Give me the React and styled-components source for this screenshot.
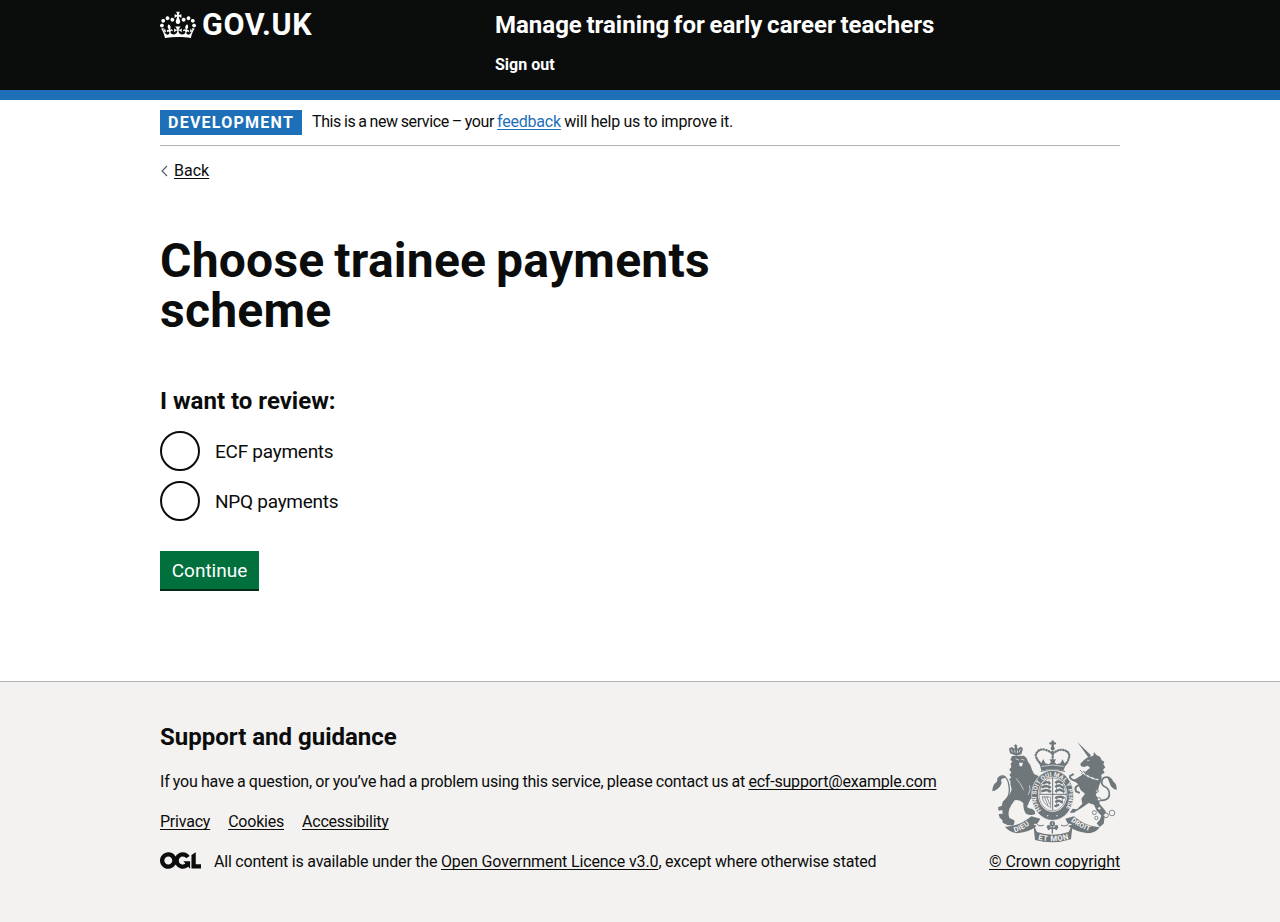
import React from 'react';
import styled, { createGlobalStyle } from 'styled-components';

const Global = createGlobalStyle`
  *, *::before, *::after { box-sizing: border-box; }
  html, body { margin: 0; padding: 0; background: #f3f2f1; }
  body { font-family: Roboto, "Liberation Sans", sans-serif; color: #0b0c0c; }
  h1, h2, p { margin: 0; padding: 0; }
`;

const Container = styled.div`
  width: 960px;
  margin: 0 auto;
`;

const Header = styled.header`
  height: 100px;
  background: #0b0c0c;
  border-bottom: 10px solid #1d70b8;
  color: #fff;
`;

const HeaderRow = styled(Container)`
  display: grid;
  grid-template-columns: 335px 1fr;
`;

const Logo = styled.a`
  display: flex;
  align-items: flex-start;
  gap: 6px;
  height: 50px;
  padding-top: 9px;
  color: #fff;
`;

const Crown = styled.svg`
  width: 36px;
  height: 32px;
  fill: currentColor;
  display: block;
`;

const LogoText = styled.span`
  padding-top: 1px;
  font: 700 30.5px/30px Roboto, sans-serif;
  letter-spacing: 0.65px;
`;

const ServiceName = styled.a`
  display: block;
  padding-top: 10px;
  font-size: 24px;
  line-height: 30px;
  font-weight: 700;
  word-spacing: -1.3px;
  white-space: nowrap;
`;

const NavLink = styled.a`
  display: block;
  margin-top: 15px;
  font-size: 16px;
  line-height: 20px;
  font-weight: 700;
`;

const Page = styled.div`
  background: #fff;
`;

const PhaseBanner = styled.div`
  display: flex;
  align-items: flex-start;
  gap: 10px;
  height: 46px;
  padding: 10px 0;
  border-bottom: 1px solid #b1b4b6;
`;

const Tag = styled.strong`
  width: 142px;
  height: 25px;
  padding-left: 8px;
  background: #1d70b8;
  color: #fff;
  font-size: 16px;
  line-height: 25px;
  letter-spacing: 1.25px;
  white-space: nowrap;
`;

const Text = styled.p`
  margin-top: ${(p) => p.$top || 0}px;
  font-size: 16px;
  line-height: 20px;
  letter-spacing: ${(p) => p.$track}px;
  word-spacing: ${(p) => p.$word || 0}px;
  white-space: nowrap;
`;

const Span = styled.span`
  letter-spacing: ${(p) => p.$track}px;
  word-spacing: ${(p) => p.$word}px;
`;

const Link = styled.a`
  color: ${(p) => (p.$blue ? '#1d70b8' : 'inherit')};
  text-decoration: underline;
  text-decoration-thickness: 1px;
  text-underline-offset: 2px;
  text-decoration-skip-ink: none;
  letter-spacing: ${(p) => (p.$track === undefined ? 'inherit' : `${p.$track}px`)};
`;

const BackLink = styled.div`
  display: flex;
  align-items: center;
  gap: 6px;
  margin-top: 15px;
  height: 20px;
  font-size: 16px;
  line-height: 20px;
`;

const Main = styled.main`
  padding: 55px 0 90px;
  height: 500px;
`;

const Title = styled.h1`
  width: 630px;
  font-size: 48px;
  line-height: 50px;
  font-weight: 700;
  letter-spacing: 0.24px;
  word-spacing: -2.3px;
  margin-bottom: 50px;
`;

const Heading = styled.h2`
  font-size: 24px;
  line-height: 30px;
  font-weight: 700;
`;

const Radios = styled.div`
  display: grid;
  gap: 10px;
  margin: 15px 0 30px;
`;

const Option = styled.label`
  display: flex;
  align-items: center;
  gap: 15px;
  height: 40px;
  font-size: 19px;
  line-height: 25px;
  letter-spacing: -0.26px;
`;

const Radio = styled.input`
  appearance: none;
  width: 40px;
  height: 40px;
  margin: 0;
  border: 2px solid #0b0c0c;
  border-radius: 50%;
`;

const Button = styled.button`
  display: block;
  width: 99px;
  height: 40px;
  border: 0;
  border-bottom: 2px solid #002d18;
  padding: 1px 0 0;
  background: #00703c;
  color: #fff;
  font: 400 19px/37px Roboto, sans-serif;
`;

const Footer = styled.footer`
  height: 241px;
  border-top: 1px solid #b1b4b6;
  background: #f3f2f1;
`;

const FooterRow = styled(Container)`
  display: flex;
  justify-content: space-between;
  padding-top: 40px;
`;

const FooterLinks = styled.div`
  display: flex;
  gap: 18px;
  margin: 20px 0;
  font-size: 16px;
  line-height: 20px;
  letter-spacing: -0.22px;
`;

const Licence = styled.div`
  display: flex;
  align-items: center;
  gap: 13px;
`;

const Ogl = styled.svg`
  width: 41px;
  height: 17px;
  fill: currentColor;
  margin-bottom: 3px;
`;

const Copyright = styled.div`
  width: 131px;
  padding-top: 18px;
`;

const CrestArt = styled.svg`
  display: block;
  width: 125px;
  height: 102px;
  margin: 0 0 10px 3px;
  overflow: visible;
`;

const GREY = '#6f777b';
const PAPER = '#f3f2f1';

const Ball = ({ x, y, r = 4 }) => <circle cx={x} cy={y} r={r} fill={GREY} />;

function Crest() {
  const line = { fill: 'none', stroke: GREY, strokeLinecap: 'round', strokeLinejoin: 'round' };
  const light = { fill: 'none', stroke: PAPER, strokeLinecap: 'round', strokeLinejoin: 'round' };
  const motto = { fill: PAPER, fontFamily: 'Roboto, sans-serif', fontWeight: 700 };
  return (
    <CrestArt viewBox="36 30 375 306" role="img" aria-label="Royal coat of arms">
      <defs>
        <path id="garter" d="M184 241A49 59 0 1 1 252 241" />
        <path id="ribbon-left" d="M104 307Q136 298 160 274" />
        <path id="ribbon-mid" d="M174 328Q218 340 266 327" />
        <path id="ribbon-right" d="M272 273Q302 299 342 306" />
      </defs>

      {/* lion: tail, body and legs */}
      <path {...line} strokeWidth="4" d="M76 211Q90 196 88 176Q86 145 71 138Q60 135 53 147" />
      <path fill={GREY} d="M76 137Q54 137 50 156Q37 163 37 184Q55 180 62 166Q67 159 63 149Q68 143 76 144Z" />
      <path fill={GREY} d="M96 78L131 77Q141 82 144 95L151 105L156 119L162 132L177 139L172 149L179 156L170 164L174 176L166 184L171 197L160 195L164 209L152 206Q145 221 141 231Q149 238 156 236Q168 243 165 253Q152 258 139 252Q129 241 130 219Q118 208 104 211Q94 224 88 237Q83 256 89 265L102 270Q106 278 99 287L82 285L68 278L67 270L59 263L56 252L68 251L67 240L56 242L54 232L66 227Q66 214 76 208Q91 196 95 178Q91 167 91 154L87 147L94 143L88 134L94 128L88 118L94 112L92 101L97 94L91 90Z" />
      <path {...light} strokeWidth="2" d="M108 87L116 90M125 88L132 90M109 146Q122 160 130 178M149 167Q154 180 145 194" />
      <path fill={PAPER} d="M117 98L129 98L126 109L119 109Z" />
      {/* lion's crown */}
      <path fill={GREY} d="M90 70L87 57Q89 50 97 52L104 57L104 48L111 48L112 57L121 50Q130 52 128 59L124 73L109 77Z" />
      <path {...light} strokeWidth="2" d="M94 59L97 66M104 61L105 67M113 61L112 68M121 58L118 66" />
      <path {...line} strokeWidth="3" d="M107 44V51M103 47H111" />

      {/* imperial crown */}
      <path {...line} strokeWidth="7" d="M218 34V57M211 40H225" />
      <circle cx="218" cy="55" r="6" fill={GREY} />
      <path {...line} strokeWidth="7" strokeDasharray="1 7" d="M184 103Q164 83 168 72Q176 55 195 59Q208 63 218 71Q232 60 245 59Q267 62 268 77Q266 94 254 106" />
      <path {...line} strokeWidth="7" strokeDasharray="1 7" d="M218 65V96" />
      <path fill={GREY} d="M180 106L174 95L184 98L190 87L196 100L207 103L213 96L208 87L218 90L228 87L224 97L230 103L241 100L248 88L253 99L263 96L256 107L250 122Q218 114 184 122Z" />
      <path {...light} strokeWidth="2" d="M186 109Q218 101 250 109" />
      <path {...line} strokeWidth="3" d="M183 124Q218 114 254 124" />

      {/* garter and shield */}
      <ellipse cx="218" cy="196" rx="63" ry="75" fill={GREY} stroke={PAPER} strokeWidth="2" />
      <text {...motto} fontSize="18.5" letterSpacing="0.3">
        <textPath href="#garter">HONI SOIT QUI MAL Y PENSE</textPath>
      </text>
      <ellipse cx="218" cy="193" rx="44" ry="53" fill={PAPER} />
      <ellipse cx="218" cy="193" rx="41" ry="50" {...line} strokeWidth="2" />
      <path {...line} strokeWidth="3" d="M218 145V240M179 193H258" />
      <path {...line} strokeWidth="7" d="M191 160L199 156L209 159M187 171L199 168L210 172M187 183L199 180L211 184M228 157L236 154L245 159M228 169L238 166L250 173M228 183L239 179L251 184M228 203L240 200L251 203M228 215L237 212L246 217M226 228L235 225" />
      <path {...line} strokeWidth="2.2" d="M182 164V190M207 152V188M230 152V188M251 166V190M230 199V231M247 198V216M187 201Q187 219 208 231M193 200L204 227M200 199L209 222M187 201H212V234" />
      <path {...light} strokeWidth="4" d="M203 257V257.5M231 257V257.5" />

      {/* unicorn: horn, head, body and legs */}
      <path fill={GREY} d="M292 36L333 76L326 83Z" />
      <path fill={GREY} d="M323 82L340 77L342 66L349 75L360 80L365 91L373 95L370 103L376 112L369 119L374 128L364 134L365 149L358 165L354 180L347 195L357 208L359 222L376 242L383 260L374 261L371 281L359 291L350 280L359 270L364 257L350 242L342 224L326 219L308 232Q292 242 281 248L269 248L278 236L291 238L307 221L304 206L315 191L302 180L293 161L280 151L290 145L307 134L322 120L330 114L324 107L312 111L303 109L301 101L312 90Z" />
      <path {...light} strokeWidth="5" d="M304 123Q325 145 353 148" />
      <path {...line} strokeWidth="2.5" d="M301 121L307 127L312 123L318 136L325 130L331 142L340 136L345 147L356 144M304 130Q325 149 352 153" />
      <path {...light} strokeWidth="2" d="M322 91L328 91" />
      <path {...line} strokeWidth="6" d="M292 154Q268 150 270 138L279 133M305 165Q281 165 288 184L297 188" />
      <path {...line} strokeWidth="5" d="M357 211Q387 213 388 194Q389 175 372 169Q359 160 370 144Q386 136 396 152" />
      <path fill={GREY} d="M382 142Q394 145 399 154Q411 161 410 180Q393 175 389 160Z" />
      {/* chain */}
      <g fill={PAPER} stroke={GREY} strokeWidth="2.5">
        <circle cx="351" cy="183" r="4" />
        <circle cx="357" cy="208" r="5" />
        <circle cx="358" cy="235" r="5" />
        <circle cx="343" cy="248" r="6" />
        <circle cx="349" cy="264" r="5" />
        <circle cx="378" cy="256" r="7" />
        <circle cx="396" cy="249" r="8.5" />
      </g>

      {/* ribbon */}
      <path fill={GREY} d="M75 290Q115 291 154 259L181 266L173 280L160 283L170 288Q149 306 112 310Q86 306 75 290ZM359 292Q319 291 282 259L256 266L263 280L277 283L264 288Q288 306 324 310Q348 309 359 292Z" />
      <path fill={GREY} d="M160 282L171 306Q218 322 266 306L278 282L273 328Q219 345 165 330Z" />
      <path {...line} strokeWidth="3" d="M168 278Q174 292 190 286M268 278Q260 293 244 286" />
      <text {...motto} fontSize="22" letterSpacing="1"><textPath href="#ribbon-left">DIEU</textPath></text>
      <text {...motto} fontSize="23" letterSpacing="1.7"><textPath href="#ribbon-mid">ET MON</textPath></text>
      <text {...motto} fontSize="21" letterSpacing="0.9"><textPath href="#ribbon-right">DROIT</textPath></text>
      {/* rose and thistle */}
      <path {...line} strokeWidth="4" d="M217 275V309M205 298Q217 290 230 298" />
      <Ball x={217} y={281} r={8} />
      <Ball x={206} y={291} r={6} />
      <Ball x={229} y={291} r={6} />
      <path {...light} strokeWidth="2" d="M217 278V284" />
    </CrestArt>
  );
}

export default function App() {
  return (
    <>
      <Global />
      <Header>
        <HeaderRow>
          <Logo>
            <Crown viewBox="0 0 132 97">
              <path d="M25 30.2c3.5 1.5 7.7-.2 9.1-3.7 1.5-3.6-.2-7.8-3.9-9.2-3.6-1.4-7.6.3-9.1 3.9-1.4 3.5.3 7.5 3.9 9zM9 39.5c3.6 1.5 7.8-.2 9.2-3.7 1.5-3.6-.2-7.8-3.9-9.1-3.6-1.5-7.6.2-9.1 3.8-1.4 3.5.3 7.5 3.8 9zM4.4 57.2c3.5 1.5 7.7-.2 9.1-3.8 1.5-3.6-.2-7.7-3.9-9.1-3.5-1.5-7.6.3-9.1 3.8-1.4 3.5.3 7.6 3.9 9.1zm38.3-21.4c3.5 1.5 7.7-.2 9.1-3.8 1.5-3.6-.2-7.7-3.9-9.1-3.6-1.5-7.6.3-9.1 3.8-1.3 3.6.4 7.7 3.9 9.1zm64.4-5.6c-3.6 1.5-7.8-.2-9.1-3.7-1.5-3.6.2-7.8 3.8-9.2 3.6-1.4 7.7.3 9.2 3.9 1.3 3.5-.4 7.5-3.9 9zm15.9 9.3c-3.6 1.5-7.7-.2-9.1-3.7-1.5-3.6.2-7.8 3.7-9.1 3.6-1.5 7.7.2 9.2 3.8 1.5 3.5-.3 7.5-3.8 9zm4.7 17.7c-3.6 1.5-7.8-.2-9.2-3.8-1.5-3.6.2-7.7 3.9-9.1 3.6-1.5 7.7.3 9.2 3.8 1.3 3.5-.4 7.6-3.9 9.1zM89.3 35.8c-3.6 1.5-7.8-.2-9.2-3.8-1.4-3.6.2-7.7 3.9-9.1 3.6-1.5 7.7.3 9.2 3.8 1.4 3.6-.3 7.7-3.9 9.1zM69.7 17.7l8.9 4.7V9.3l-8.9 2.8c-.2-.3-.5-.6-.9-.9L72.4 0H59.6l3.5 11.2c-.3.3-.6.5-.9.9l-8.8-2.8v13.1l8.8-4.7c.3.3.6.7.9.9l-5 15.4v.1c-.2.8-.4 1.6-.4 2.4 0 4.1 3.1 7.5 7 8.1h.2c.3 0 .7.1 1 .1.4 0 .7 0 1-.1h.2c4-.6 7.1-4.1 7.1-8.1 0-.8-.1-1.7-.4-2.4V34l-5.1-15.4c.4-.2.7-.6 1-.9zM66 92.8c16.9 0 32.8 1.1 47.1 3.2 4-16.9 8.9-26.7 14-33.5l-9.6-3.4c1 4.9 1.1 7.2 0 10.2-1.5-1.4-3-4.3-4.2-8.7L108.6 76c2.8-2 5-3.2 7.5-3.3-4.4 9.4-10 11.9-13.6 11.2-4.3-.8-6.3-4.6-5.6-7.9 1-4.7 5.7-5.9 8-.5 4.3-8.7-3-11.4-7.6-8.8 7.1-7.2 7.9-13.5 2.1-21.1-8 6.1-8.1 12.3-4.5 20.8-4.7-5.4-12.1-2.5-9.5 6.2 3.4-5.2 7.9-2 7.2 3.1-.6 4.3-6.4 7.8-13.5 7.2-10.3-.9-10.9-8-11.2-13.8 2.5-.5 7.1 1.8 11 7.3L80.2 60c-4.1 4.4-8 5.3-12.3 5.4 1.4-4.4 8-11.6 8-11.6H55.5s6.4 7.2 7.9 11.6c-4.2-.1-8-1-12.3-5.4l1.4 16.4c3.9-5.5 8.5-7.7 10.9-7.3-.3 5.8-.9 12.8-11.1 13.8-7.2.6-12.9-2.9-13.5-7.2-.7-5 3.8-8.3 7.1-3.1 2.7-8.7-4.6-11.6-9.4-6.2 3.7-8.5 3.6-14.7-4.6-20.8-5.8 7.6-5 13.9 2.2 21.1-4.7-2.6-11.9.1-7.7 8.8 2.3-5.5 7.1-4.2 8.1.5.7 3.3-1.3 7.1-5.7 7.9-3.5.7-9-1.8-13.5-11.2 2.5.1 4.7 1.3 7.5 3.3l-4.7-15.4c-1.2 4.4-2.7 7.2-4.3 8.7-1.1-3-.9-5.3 0-10.2l-9.5 3.4c5 6.9 9.9 16.7 14 33.5 14.8-2.1 30.8-3.2 47.7-3.2z" />
            </Crown>
            <LogoText>GOV.UK</LogoText>
          </Logo>
          <div>
            <ServiceName>Manage training for early career teachers</ServiceName>
            <NavLink>Sign out</NavLink>
          </div>
        </HeaderRow>
      </Header>
      <Page>
        <Container>
          <PhaseBanner>
            <Tag>DEVELOPMENT</Tag>
            <Text $top={2} $track={-0.22}>
              <Span $track={-0.38} $word={-0.65}>This is a new service – your </Span>
              <Link $blue>feedback</Link>
              <Span $track={-0.2} $word={-0.3}> will help us to improve it.</Span>
            </Text>
          </PhaseBanner>
          <BackLink>
            <svg width="8" height="12" viewBox="0 0 8 12" fill="none" stroke="#505a5f" strokeWidth="1.1">
              <path d="M7 1 2 6l5 5" />
            </svg>
            <Link>Back</Link>
          </BackLink>
          <Main>
            <Title>Choose trainee payments scheme</Title>
            <Heading>I want to review:</Heading>
            <Radios>
              <Option><Radio type="radio" name="scheme" />ECF payments</Option>
              <Option><Radio type="radio" name="scheme" />NPQ payments</Option>
            </Radios>
            <Button>Continue</Button>
          </Main>
        </Container>
      </Page>
      <Footer>
        <FooterRow>
          <div>
            <Heading>Support and guidance</Heading>
            <Text $top={20} $track={-0.2} $word={-0.45}>
              If you have a question, or you’ve had a problem using this service, please contact us at <Link>ecf-support@example.com</Link>
            </Text>
            <FooterLinks>
              <Link>Privacy</Link>
              <Link>Cookies</Link>
              <Link>Accessibility</Link>
            </FooterLinks>
            <Licence>
              <Ogl viewBox="0 0 483.2 195.7">
                <path d="M421.5 142.8V.1l-50.7 32.3v161.1h112.4v-50.7zm-122.3-9.6A47.12 47.12 0 0 1 221 97.8c0-26 21.1-47.1 47.1-47.1 16.7 0 31.4 8.7 39.7 21.8l42.7-27.2A97.63 97.63 0 0 0 268.1 0c-36.5 0-68.3 20.1-85.1 49.7A98 98 0 0 0 97.8 0C43.9 0 0 43.9 0 97.8s43.9 97.8 97.8 97.8c36.5 0 68.3-20.1 85.1-49.7a97.76 97.76 0 0 0 149.6 25.4l19.4 22.2h3v-87.8h-80l24.3 27.5zM97.8 145c-26 0-47.1-21.1-47.1-47.1s21.1-47.1 47.1-47.1 47.1 21.1 47.1 47.1S123.8 145 97.8 145" />
              </Ogl>
              <Text $track={-0.19} $word={-0.1}>
                All content is available under the <Link $track={-0.12}>Open Government Licence v3.0</Link>, except where otherwise stated
              </Text>
            </Licence>
          </div>
          <Copyright>
            <Crest />
            <Text $track={-0.08}><Link>© Crown copyright</Link></Text>
          </Copyright>
        </FooterRow>
      </Footer>
    </>
  );
}
